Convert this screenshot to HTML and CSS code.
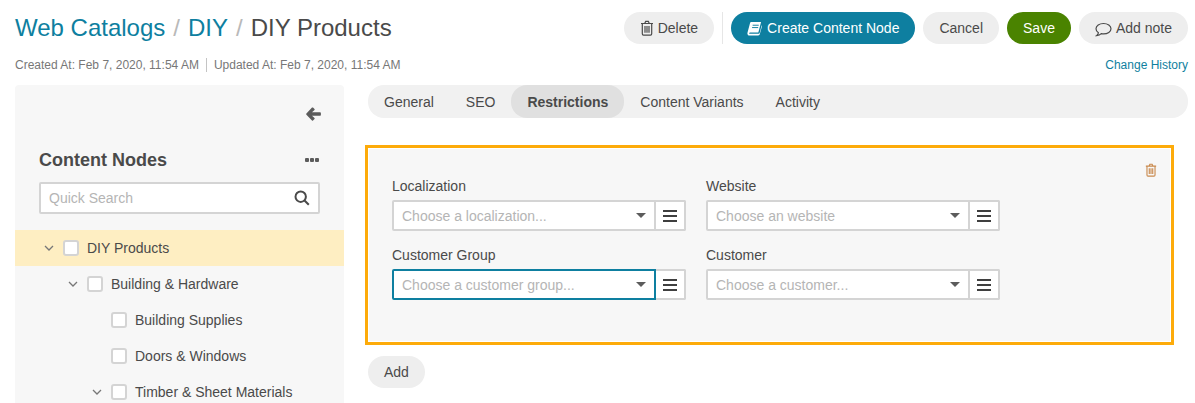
FILE: index.html
```html
<!DOCTYPE html>
<html lang="en">
<head>
<meta charset="utf-8">
<title>DIY Products</title>
<link rel="stylesheet" href="styles.css">
</head>
<body>
<div class="page">
  <header class="header">
    <h1 class="title"><a class="crumb">Web Catalogs</a><span class="sep">/</span><a class="crumb">DIY</a><span class="sep">/</span><span>DIY Products</span></h1>
    <div class="actions">
      <button class="btn"><svg class="ico" viewBox="0 0 14 16"><path class="line" d="M1 3.5h12M2.3 3.5v10.3c0 .8.5 1.4 1.2 1.4h7c.7 0 1.2-.6 1.2-1.4V3.5M4.8 3.3l.9-2h2.6l.9 2M5 6v6.7M7 6v6.7M9 6v6.7"/></svg>Delete</button>
      <span class="divider"></span>
      <button class="btn primary"><svg class="ico book" viewBox="0 0 16 16"><path class="fill-white" d="M4.6 1H15l-.2.9-2.700 10.300H3.200C2.300 12.200 2 13 2.600 13.700H12.500c.5 0 .8-.3 1-.8L15.600 4.500c.3.400.4.800.3 1.300l-2.300 8.400c-.2.700-.8 1.300-1.600 1.300H2.600C1.200 15.500 0 14 .5 12.400L3.200 2.300C3.400 1.500 4 1 4.600 1z"/><path class="line-teal" d="M6 4.500h6.500M5.400 7h6.500"/></svg>Create Content Node</button>
      <button class="btn">Cancel</button>
      <button class="btn save">Save</button>
      <button class="btn"><svg class="ico note" viewBox="0 0 17 15"><path class="line" d="M8.500 1.500c4.200 0 7.500 2.300 7.500 5.200s-3.300 5.200-7.500 5.200c-.8 0-1.500-.1-2.200-.2C5.400 12.600 3.800 13.500 1.600 13.600c1-.8 1.700-1.900 1.800-2.900C1.900 9.700 1 8.300 1 6.700 1 3.800 4.300 1.500 8.500 1.500z"/></svg>Add note</button>
    </div>
  </header>
  <div class="meta">
    <div class="dates"><span>Created At: Feb 7, 2020, 11:54 AM</span><span class="date-sep"></span><span>Updated At: Feb 7, 2020, 11:54 AM</span></div>
    <a class="history">Change History</a>
  </div>
  <main class="main">
    <aside class="sidebar">
      <div class="collapse"><svg class="arrow" viewBox="0 0 15 14"><path d="M7 .6l1.500 1.500c.3.300.3.700 0 1L6 5.200h7.900c.6 0 1 .5 1 1v1.600c0 .6-.4 1-1 1H6l2.500 2.100c.3.300.3.700 0 1L7 13.400c-.3.300-.7.300-1 0L.4 7.700c-.3-.4-.3-1 0-1.300L6 .6c.3-.3.700-.3 1 0z"/></svg></div>
      <div class="side-head"><h2 class="side-title">Content Nodes</h2><span class="dots"><i></i><i></i><i></i></span></div>
      <div class="search"><span class="search-text">Quick Search</span><svg class="search-ico" viewBox="0 0 16 16"><circle cx="6.700" cy="6.700" r="5.200"/><path d="M10.500 10.500l4.300 4.300"/></svg></div>
      <ul class="tree">
        <li class="node d0 current"><svg class="chev" viewBox="0 0 10 6"><path d="M1 1l4 4 4-4"/></svg><span class="check"></span><span>DIY Products</span></li>
        <li class="node d1"><svg class="chev" viewBox="0 0 10 6"><path d="M1 1l4 4 4-4"/></svg><span class="check"></span><span>Building &amp; Hardware</span></li>
        <li class="node d2"><span class="chev"></span><span class="check"></span><span>Building Supplies</span></li>
        <li class="node d2"><span class="chev"></span><span class="check"></span><span>Doors &amp; Windows</span></li>
        <li class="node d2"><svg class="chev" viewBox="0 0 10 6"><path d="M1 1l4 4 4-4"/></svg><span class="check"></span><span>Timber &amp; Sheet Materials</span></li>
      </ul>
    </aside>
    <section class="content">
      <nav class="tabs">
        <a class="tab">General</a><a class="tab">SEO</a><a class="tab active">Restrictions</a><a class="tab">Content Variants</a><a class="tab">Activity</a>
      </nav>
      <div class="box">
        <svg class="ico box-trash" viewBox="0 0 14 16"><path class="line-orange" d="M1 3.500h12M2.300 3.500v10.300c0 .8.500 1.400 1.200 1.400h7c.7 0 1.200-.6 1.200-1.400V3.500M4.800 3.300l.9-2h2.600l.9 2M5 6v6.700M7 6v6.700M9 6v6.700"/></svg>
        <div class="fields">
          <div class="field"><label class="label">Localization</label><div class="combo"><div class="select"><span class="ph">Choose a localization...</span><i class="caret"></i></div><div class="list-btn"><i></i><i></i><i></i></div></div></div>
          <div class="field"><label class="label">Website</label><div class="combo"><div class="select"><span class="ph">Choose an website</span><i class="caret"></i></div><div class="list-btn"><i></i><i></i><i></i></div></div></div>
          <div class="field"><label class="label">Customer Group</label><div class="combo"><div class="select focus"><span class="ph">Choose a customer group...</span><i class="caret"></i></div><div class="list-btn"><i></i><i></i><i></i></div></div></div>
          <div class="field"><label class="label">Customer</label><div class="combo"><div class="select"><span class="ph">Choose a customer...</span><i class="caret"></i></div><div class="list-btn"><i></i><i></i><i></i></div></div></div>
        </div>
      </div>
      <button class="btn add">Add</button>
    </section>
  </main>
</div>
</body>
</html>
```
FILE: styles.css
```css
* { box-sizing: border-box; }
html, body { margin: 0; height: 100%; overflow: hidden; background: #fff; }
body { font-family: "Liberation Sans", Arial, sans-serif; font-size: 14px; color: #4a4a4a; }
.page { padding: 12px 7px 0 15px; }
.header { display: flex; justify-content: space-between; align-items: center; height: 32px; }
.title { margin: 0; font-size: 24px; font-weight: 400; line-height: 32px; color: #4a4a4a; }
.crumb { color: #0e7fa0; }
.sep { color: #b9b9b9; margin: 0 8px; }
.actions { display: flex; align-items: center; gap: 8px; }
.btn { display: inline-flex; align-items: center; height: 32px; padding: 0 16px; border: 0; border-radius: 16px; background: #eee; color: #4a4a4a; font: 14px/32px "Liberation Sans", Arial, sans-serif; white-space: nowrap; }
.primary { background: #0e7fa0; color: #fff; }
.save { background: #4a8300; color: #fff; }
.divider { width: 1px; height: 32px; background: #e6e6e6; }
.ico { width: 14px; height: 16px; margin-right: 4px; flex: none; }
.book { width: 15px; height: 15px; margin-right: 5px; }
.note { width: 17px; height: 15px; margin-right: 4px; margin-top: 2px; }
.line { fill: none; stroke: #4a4a4a; stroke-width: 1.200; }
.line-orange { fill: none; stroke: #c98a4e; stroke-width: 1.300; }
.line-teal { fill: none; stroke: #0e7fa0; stroke-width: 1; }
.fill-white { fill: #fff; }
.meta { display: flex; justify-content: space-between; align-items: center; height: 18px; margin-top: 12px; font-size: 12px; }
.dates { display: flex; align-items: center; color: #777; }
.date-sep { width: 1px; height: 14px; background: #c4c4c4; margin: 0 7px; }
.history { color: #0e7fa0; }
.main { display: flex; align-items: flex-start; gap: 24px; margin-top: 11px; }
.sidebar { flex: none; width: 329px; height: 320px; background: #f7f7f7; border-radius: 4px 4px 0 0; }
.collapse { display: flex; justify-content: flex-end; padding: 22px 23px 0 0; height: 63px; }
.arrow { width: 15px; height: 14px; fill: #5c5c5c; }
.side-head { display: flex; justify-content: space-between; align-items: center; height: 24px; padding: 0 25px 0 24px; }
.side-title { margin: 0; font-size: 18px; font-weight: 700; line-height: 24px; color: #4a4a4a; }
.dots { display: flex; gap: 1px; }
.dots i { width: 4px; height: 4px; background: #5c5c5c; border-radius: 1px; }
.search { display: flex; justify-content: space-between; align-items: center; height: 32px; margin: 10px 24px 0; padding: 0 8px; background: #fff; border: 2px solid #d4d4d4; border-radius: 2px; }
.search-text { color: #b5b5b5; }
.search-ico { width: 16px; height: 16px; fill: none; stroke: #4a4a4a; stroke-width: 2; }
.tree { list-style: none; margin: 16px 0 0; padding: 0; }
.node { display: flex; align-items: center; height: 36px; white-space: nowrap; }
.d0 { padding-left: 29px; }
.d1 { padding-left: 53px; }
.d2 { padding-left: 77px; }
.current { background: #feeec2; }
.chev { width: 10px; height: 6px; margin-right: 9px; flex: none; fill: none; stroke: #777; stroke-width: 1.300; }
span.chev { height: 0; }
.check { width: 16px; height: 16px; margin-right: 8px; flex: none; background: #fff; border: 2px solid #d4d4d4; border-radius: 3px; }
.content { flex: 1; min-width: 0; }
.tabs { display: flex; height: 33px; background: #f1f1f1; border-radius: 16px; }
.tab { display: flex; align-items: center; padding: 0 16px; border-radius: 16px; }
.active { background: #e0e0e0; font-weight: 700; }
.box { position: relative; height: 194px; margin: 30px 17px 0 0; padding: 27px 23px; background: #f7f7f7; border: 1px solid #fff; outline: 3px solid #fdab0a; }
.box-trash { position: absolute; top: 14px; right: 13px; width: 12px; height: 14px; margin: 0; }
.fields { display: grid; grid-template-columns: 294px 294px; column-gap: 20px; row-gap: 14px; }
.label { display: block; height: 20px; line-height: 20px; margin-bottom: 4px; }
.combo { display: flex; height: 31px; }
.select { flex: 1; display: flex; align-items: center; justify-content: space-between; padding: 0 8px; background: #fff; border: 2px solid #d4d4d4; border-radius: 2px 0 0 2px; }
.focus { border-color: #0e7fa0; }
.ph { color: #b5b5b5; }
.caret { width: 0; height: 0; border-left: 5px solid transparent; border-right: 5px solid transparent; border-top: 5px solid #5c5c5c; margin-right: 0; }
.list-btn { width: 30px; display: flex; flex-direction: column; justify-content: center; align-items: center; gap: 3px; background: #fff; border: 2px solid #d4d4d4; border-left: 0; border-radius: 0 2px 2px 0; }
.list-btn i { width: 14px; height: 2px; background: #3f3f3f; }
.add { margin-top: 14px; }
```
